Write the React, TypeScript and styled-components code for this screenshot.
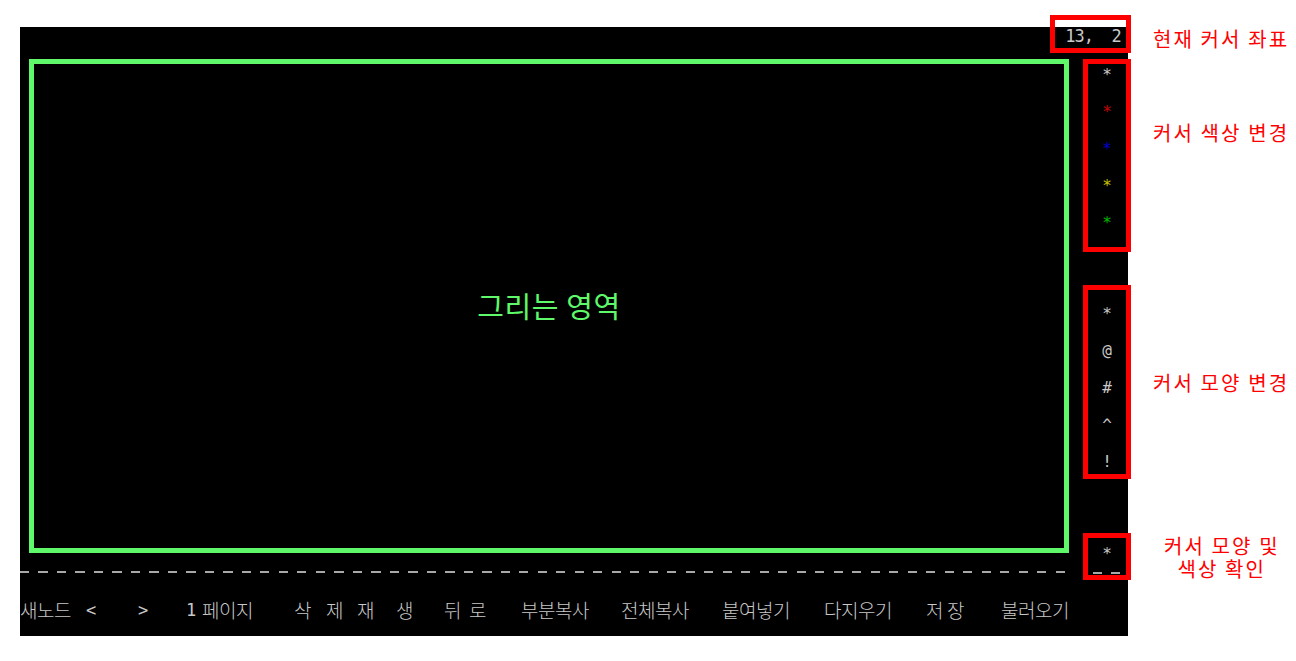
import React from "react";
import styled, { createGlobalStyle } from "styled-components";

const GlobalStyle = createGlobalStyle`
  html, body { margin: 0; padding: 0; background: #ffffff; }
  body { font-family: "Noto Sans CJK KR", "Noto Sans", sans-serif; }
`;

const GREEN = "#5ff86b";
const RED = "#ff0000";
const TEXT = "#c8c8c8";

const Page = styled.div`
  box-sizing: border-box;
  width: 1296px;
  height: 661px;
  padding: 27px 0 0 20px;
  overflow: hidden;
`;

const Console = styled.div`
  width: 1108px;
  height: 609px;
  background: #000000;
  display: grid;
  grid-template-columns: 1049px 59px;
  grid-template-rows: 32px 531px 46px;
  grid-template-areas:
    "top top"
    "main side"
    "menu menu";
`;

const TopBar = styled.div`
  grid-area: top;
  display: flex;
  align-items: flex-start;
  padding-left: 1030px;
  min-width: 0;
`;

const Frame = styled.div<{ $w: number; $h: number; $pt?: number; $pl?: number }>`
  box-sizing: border-box;
  flex-shrink: 0;
  width: ${(p) => p.$w}px;
  height: ${(p) => p.$h}px;
  border: 5px solid ${RED};
  padding: ${(p) => p.$pt ?? 0}px 0 0 ${(p) => p.$pl ?? 0}px;
`;

const CoordFrame = styled(Frame)`
  margin-top: -12px;
`;

const ConsoleText = styled.div`
  font-family: "DejaVu Sans Mono", "Liberation Mono", monospace;
  font-size: 17px;
  letter-spacing: -0.98px;
  line-height: 18.5px;
  color: ${TEXT};
  white-space: pre;
`;

const Label = styled.div<{ $top?: number; $center?: boolean; $ml?: number }>`
  flex-shrink: 0;
  display: flex;
  flex-direction: column;
  align-items: center;
  margin-left: ${(p) => p.$ml ?? 22}px;
  margin-top: ${(p) => p.$top ?? 0}px;
  align-self: ${(p) => (p.$center ? "center" : "flex-start")};
  color: ${RED};
  font-family: "Noto Sans CJK KR", "Noto Sans", sans-serif;
  font-size: 20px;
  line-height: 23px;
  letter-spacing: 2.1px;
  white-space: nowrap;
`;

const LabelLine = styled.span`
  display: block;
  height: 23px;
`;

const Main = styled.div`
  grid-area: main;
  display: flex;
  flex-direction: column;
  align-items: flex-start;
`;

const Canvas = styled.div`
  box-sizing: border-box;
  margin-left: 9px;
  width: 1040px;
  height: 494px;
  border: 5px solid ${GREEN};
  display: flex;
  align-items: center;
  justify-content: center;
`;

const CanvasTitle = styled.span`
  color: ${GREEN};
  font-family: "Noto Sans CJK KR", "Noto Sans", sans-serif;
  font-size: 29px;
  line-height: 1;
  letter-spacing: 0.6px;
  margin-top: -1px;
`;

const DashLine = styled.div`
  margin-top: 18px;
  width: 1046px;
  height: 2px;
  background: repeating-linear-gradient(
    to right,
    #a8a8a8 0 9px,
    transparent 9px 18.5px
  );
`;

const Side = styled.div`
  grid-area: side;
  display: flex;
  flex-direction: column;
  align-items: flex-start;
  min-width: 0;
`;

const Callout = styled.div<{ $mt: number }>`
  display: flex;
  align-items: flex-start;
  margin-top: ${(p) => p.$mt}px;
  padding-left: 14px;
`;

const SymbolList = styled.div`
  display: flex;
  flex-direction: column;
  gap: 18.5px;
`;

const SymbolItem = styled.div<{ $color?: string }>`
  height: 18.5px;
  line-height: 18.5px;
  text-align: center;
  font-family: "DejaVu Sans Mono", "Liberation Mono", monospace;
  font-size: 16px;
  color: ${(p) => p.$color ?? TEXT};
`;

const DashPair = styled.div`
  display: flex;
  gap: 9px;
  margin: 8px 0 0 5px;
`;

const Dash = styled.span`
  width: 9px;
  height: 2px;
  background: #a8a8a8;
`;

const Menu = styled.div`
  grid-area: menu;
  display: flex;
  align-items: flex-start;
  padding-top: 10.5px;
`;

const MenuItem = styled.div<{ $w?: number; $mono?: boolean }>`
  flex-shrink: 0;
  width: ${(p) => (p.$w ? `${p.$w}px` : "auto")};
  color: ${TEXT};
  white-space: pre;
  line-height: 18.5px;
  font-family: ${(p) =>
    p.$mono
      ? `"DejaVu Sans Mono", "Liberation Mono", monospace`
      : `"Noto Sans CJK KR", "Noto Sans", sans-serif`};
  font-size: ${(p) => (p.$mono ? "17px" : "19px")};
  letter-spacing: ${(p) => (p.$mono ? "0px" : "-0.5px")};
  font-weight: 300;
`;

const colorStars = ["#c8c8c8", "#c80000", "#0000d0", "#c8c000", "#00b800"];
const shapes = ["*", "@", "#", "^", "!"];

const menuItems: { t: string; x: number; mono?: boolean }[] = [
  { t: "새노드", x: 20 },
  { t: "<", x: 86, mono: true },
  { t: ">", x: 138, mono: true },
  { t: "1", x: 186, mono: true },
  { t: "페이지", x: 202 },
  { t: "삭", x: 294 },
  { t: "제", x: 326 },
  { t: "재", x: 357 },
  { t: "생", x: 396 },
  { t: "뒤", x: 444 },
  { t: "로", x: 469 },
  { t: "부분복사", x: 521 },
  { t: "전체복사", x: 621 },
  { t: "붙여넣기", x: 722 },
  { t: "다지우기", x: 824 },
  { t: "저", x: 926 },
  { t: "장", x: 947 },
  { t: "불러오기", x: 1001 },
];

export default function App() {
  return (
    <>
      <GlobalStyle />
      <Page>
        <Console>
          <TopBar>
            <CoordFrame $w={81} $h={38} $pt={7} $pl={10.25}>
              <ConsoleText>{"13,  2"}</ConsoleText>
            </CoordFrame>
            <Label $top={0}>현재 커서 좌표</Label>
          </TopBar>

          <Main>
            <Canvas>
              <CanvasTitle>그리는 영역</CanvasTitle>
            </Canvas>
            <DashLine />
          </Main>

          <Side>
            <Callout $mt={0}>
              <Frame $w={48} $h={193} $pt={1.5}>
                <SymbolList>
                  {colorStars.map((c) => (
                    <SymbolItem key={c} $color={c}>
                      *
                    </SymbolItem>
                  ))}
                </SymbolList>
              </Frame>
              <Label $top={62}>커서 색상 변경</Label>
            </Callout>

            <Callout $mt={33}>
              <Frame $w={48} $h={194} $pt={15}>
                <SymbolList>
                  {shapes.map((s) => (
                    <SymbolItem key={s}>{s}</SymbolItem>
                  ))}
                </SymbolList>
              </Frame>
              <Label $center>커서 모양 변경</Label>
            </Callout>

            <Callout $mt={54}>
              <Frame $w={48} $h={47} $pt={7}>
                <SymbolItem>*</SymbolItem>
                <DashPair>
                  <Dash />
                  <Dash />
                </DashPair>
              </Frame>
              <Label $center $ml={33}>
                <LabelLine>커서 모양 및</LabelLine>
                <LabelLine>색상 확인</LabelLine>
              </Label>
            </Callout>
          </Side>

          <Menu>
            {menuItems.map((m, i) => {
              const next = menuItems[i + 1];
              return (
                <MenuItem key={m.t + i} $w={next ? next.x - m.x : undefined} $mono={m.mono}>
                  {m.t}
                </MenuItem>
              );
            })}
          </Menu>
        </Console>
      </Page>
    </>
  );
}
